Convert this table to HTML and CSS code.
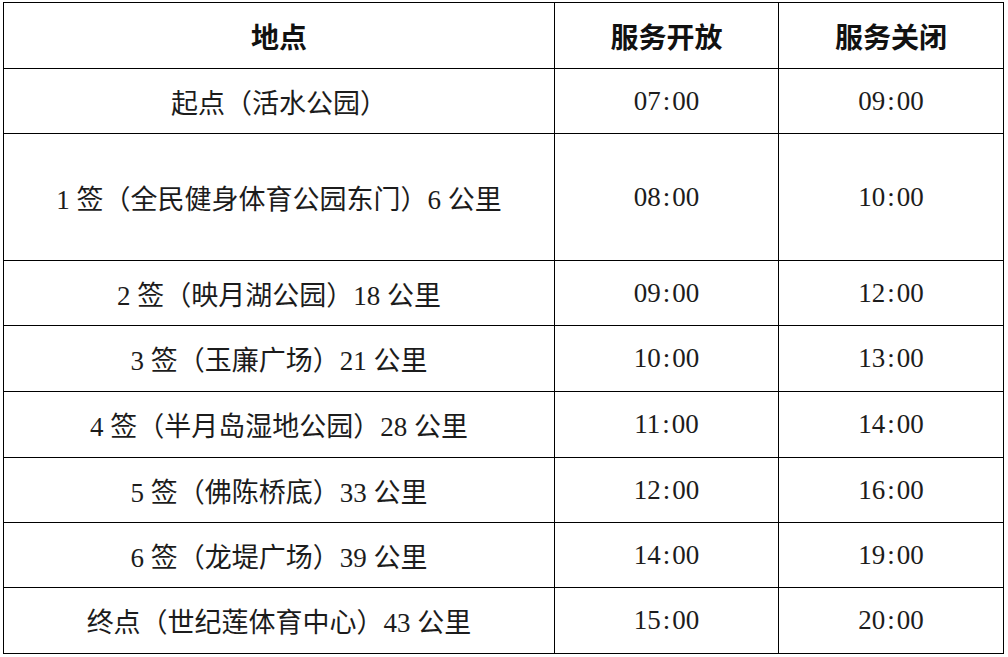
FILE: index.html
```html
<!DOCTYPE html>
<html lang="zh-CN">
<head>
<meta charset="utf-8">
<title>服务时间</title>
<link rel="stylesheet" href="styles.css">
</head>
<body>
<div class="table">
  <div class="row head h66">
    <div class="cell c1">地点</div>
    <div class="cell c2">服务开放</div>
    <div class="cell c3">服务关闭</div>
  </div>
  <div class="row h65">
    <div class="cell c1">起点（活水公园）</div>
    <div class="cell c2">07<span class="col">:</span>00</div>
    <div class="cell c3">09<span class="col">:</span>00</div>
  </div>
  <div class="row h127">
    <div class="cell c1">1 签（全民健身体育公园东门）6 公里</div>
    <div class="cell c2">08<span class="col">:</span>00</div>
    <div class="cell c3">10<span class="col">:</span>00</div>
  </div>
  <div class="row h65">
    <div class="cell c1">2 签（映月湖公园）18 公里</div>
    <div class="cell c2">09<span class="col">:</span>00</div>
    <div class="cell c3">12<span class="col">:</span>00</div>
  </div>
  <div class="row h66">
    <div class="cell c1">3 签（玉廉广场）21 公里</div>
    <div class="cell c2">10<span class="col">:</span>00</div>
    <div class="cell c3">13<span class="col">:</span>00</div>
  </div>
  <div class="row h66">
    <div class="cell c1">4 签（半月岛湿地公园）28 公里</div>
    <div class="cell c2">11<span class="col">:</span>00</div>
    <div class="cell c3">14<span class="col">:</span>00</div>
  </div>
  <div class="row h65">
    <div class="cell c1">5 签（佛陈桥底）33 公里</div>
    <div class="cell c2">12<span class="col">:</span>00</div>
    <div class="cell c3">16<span class="col">:</span>00</div>
  </div>
  <div class="row h65">
    <div class="cell c1">6 签（龙堤广场）39 公里</div>
    <div class="cell c2">14<span class="col">:</span>00</div>
    <div class="cell c3">19<span class="col">:</span>00</div>
  </div>
  <div class="row h66">
    <div class="cell c1">终点（世纪莲体育中心）43 公里</div>
    <div class="cell c2">15<span class="col">:</span>00</div>
    <div class="cell c3">20<span class="col">:</span>00</div>
  </div>
</div>
</body>
</html>
```

FILE: styles.css
```css
* { box-sizing: border-box; }
html, body {
  margin: 0;
  padding: 0;
  background: #ffffff;
}
body {
  padding: 2px 0 0 3px;
  font-family: "Liberation Serif", "Noto Sans CJK SC", serif;
  font-size: 27px;
  color: #1c1c1c;
}
.table {
  width: 1001px;
  border-top: 1px solid #000;
  border-left: 1px solid #000;
}
.row {
  display: flex;
}
.h65 { height: 65px; }
.h66 { height: 66px; }
.h127 { height: 127px; }
.cell {
  display: flex;
  align-items: center;
  justify-content: center;
  border-right: 1px solid #000;
  border-bottom: 1px solid #000;
  white-space: nowrap;
}
.c1 { width: 551px; }
.c2 { width: 224px; }
.c3 { width: 225px; }
.head .cell {
  font-size: 28px;
  font-weight: 700;
  font-family: "Noto Sans CJK SC", sans-serif;
  color: #111;
}
.col {
  margin: 0 2px;
}
```
